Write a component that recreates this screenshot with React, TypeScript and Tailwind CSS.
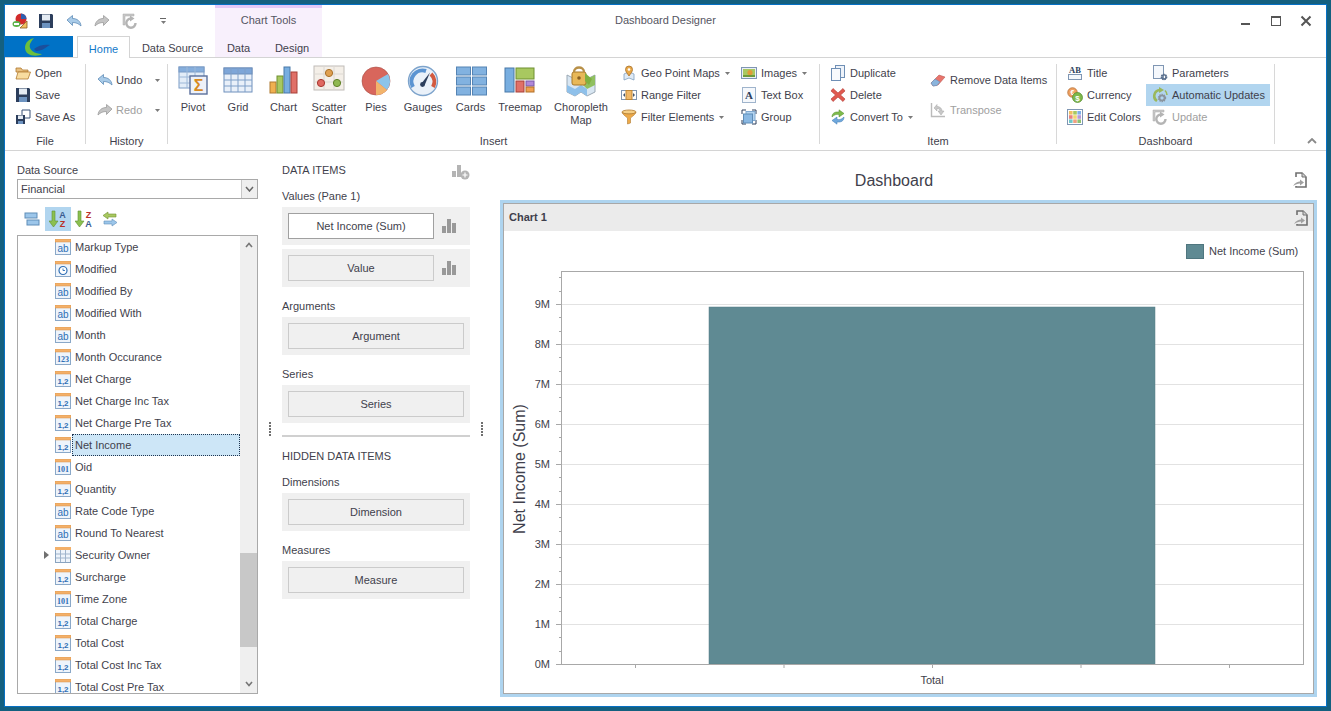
import React from "react";

const Svg = ({ size = 16, box = 16, children }: { size?: number; box?: number; children: React.ReactNode }) => (
  <svg width={size} height={size} viewBox={`0 0 ${box} ${box}`} className="shrink-0 block">
    {children}
  </svg>
);

// small icons
const AppPie = () => (
  <Svg>
    <circle cx="9" cy="6" r="5.5" fill="#d22b2b" />
    <path d="M9 6V.5A5.5 5.5 0 0 1 14.5 6Z" fill="#2f5fb0" />
    <ellipse cx="4.5" cy="11" rx="4" ry="3" fill="#5cb34a" />
    <rect x="2" y="10" width="5" height="2" fill="#fff" />
    <path d="M8 15 15 8V15Z" fill="#f0c060" stroke="#8a5a20" strokeWidth=".8" />
  </Svg>
);
const Floppy = () => (
  <Svg>
    <path d="M1 1H14L15 2V15H1Z" fill="#2c3e5c" />
    <rect x="4" y="1.5" width="8" height="6" fill="#e4ebf3" />
    <rect x="4" y="10" width="8" height="5" fill="#6d93c0" />
  </Svg>
);
const SaveAs = () => (
  <Svg>
    <path d="M7 1H15V9H7Z" fill="#fff" stroke="#3b5378" />
    <path d="M1 6H10V15H1Z" fill="#2c3e5c" />
    <rect x="3" y="6.5" width="5" height="3.5" fill="#e4ebf3" />
    <rect x="3" y="12" width="5" height="3" fill="#6d93c0" />
  </Svg>
);
const Undo = () => (
  <Svg>
    <path d="M1 7 6.5 2.5V5.5C11 5.5 14.5 8 15 13 12.5 10.5 10 9.5 6.5 9.5V12.5Z" fill="#a9cbe8" stroke="#5f8db8" strokeWidth=".8" />
  </Svg>
);
const Redo = () => (
  <Svg>
    <path d="M15 7 9.5 2.5V5.5C5 5.5 1.5 8 1 13 3.5 10.5 6 9.5 9.5 9.5V12.5Z" fill="#c4c4c4" stroke="#9c9c9c" strokeWidth=".8" />
  </Svg>
);
const Refresh = () => (
  <Svg>
    <path d="M1 1H12V3H3V12H1Z" fill="#c8c8c8" stroke="#aaa" strokeWidth=".5" />
    <path d="M13.5 10A4.6 4.6 0 1 1 9 5.5" fill="none" stroke="#b4b4b4" strokeWidth="2.4" />
    <path d="M8 2.5 12.5 5.5 8 8.5Z" fill="#b4b4b4" />
  </Svg>
);
const Folder = () => (
  <Svg>
    <path d="M1 3H6L7.5 5H13V7H1Z" fill="#e8c080" stroke="#b07a30" strokeWidth=".8" />
    <path d="M1 14 3 7H15.5L13 14Z" fill="#f8dca0" stroke="#b07a30" strokeWidth=".8" />
  </Svg>
);
const GeoPin = () => (
  <Svg>
    <path d="M3 9 5 8H11L13 9V15L8 13 3 15Z" fill="#dfeaf5" stroke="#7f9fc0" strokeWidth=".8" />
    <path d="M8 11C6 8 4.5 6.5 4.5 4.5A3.5 3.5 0 0 1 11.5 4.5C11.5 6.5 10 8 8 11Z" fill="#e8a848" stroke="#a8702a" strokeWidth=".8" />
    <circle cx="8" cy="4.5" r="1.3" fill="#fff" />
  </Svg>
);
const RangeIcon = () => (
  <Svg>
    <rect x=".5" y="3.5" width="15" height="9" fill="#fff" stroke="#7f96b3" />
    <rect x="5" y="3.5" width="6" height="9" fill="#f0b868" stroke="#c08838" />
    <path d="M4 6V10L2 8ZM12 6V10L14 8Z" fill="#42546c" />
  </Svg>
);
const Funnel = () => (
  <Svg>
    <ellipse cx="8" cy="3" rx="7" ry="2" fill="#f6cf86" stroke="#b07a30" strokeWidth=".8" />
    <path d="M1 3.5C3 7 6 8 6.5 9V15L9.5 14V9C10 8 13 7 15 3.5 12 5.5 4 5.5 1 3.5Z" fill="#eeaa48" stroke="#b07a30" strokeWidth=".6" />
  </Svg>
);
const ImagesIcon = () => (
  <Svg>
    <rect x=".5" y="2.5" width="15" height="11" fill="#e8eef6" stroke="#7f96b3" />
    <rect x="2" y="4" width="12" height="8" fill="#a8c860" />
    <circle cx="9" cy="7.5" r="2.6" fill="#e09a38" />
    <rect x="2" y="10" width="12" height="2" fill="#6f9a3a" />
  </Svg>
);
const TextBoxIcon = () => (
  <Svg>
    <rect x="1.5" y=".5" width="13" height="15" fill="#f5f8fc" stroke="#9fb4cc" />
    <text x="8" y="12" textAnchor="middle" fontSize="11" fontWeight="700" fontFamily="Liberation Serif, serif" fill="#2c3e5c">A</text>
  </Svg>
);
const GroupIcon = () => (
  <Svg>
    <path d="M1 5V1H5M11 1H15V5M15 11V15H11M5 15H1V11" fill="none" stroke="#2c3e5c" strokeWidth="1" />
    <rect x="5" y="2.5" width="9" height="9" fill="#b4d4f0" stroke="#7fa8d0" />
    <rect x="2.5" y="5" width="9" height="9" fill="#8ab8e2" stroke="#5f8db8" />
  </Svg>
);
const DuplicateIcon = () => (
  <Svg>
    <rect x="5.5" y=".5" width="9" height="12" fill="#eef3fa" stroke="#6f8fb5" />
    <rect x="1.5" y="3.5" width="9" height="12" fill="#f8fafd" stroke="#6f8fb5" />
  </Svg>
);
const DeleteIcon = () => (
  <Svg>
    <path d="M3 1.5 8 6 13 1.5 15 4 10.5 8 15 12 13 14.5 8 10 3 14.5 1 12 5.5 8 1 4Z" fill="#e05a50" stroke="#b03830" strokeWidth=".6" />
  </Svg>
);
const ConvertIcon = () => (
  <Svg>
    <path d="M2 8C2 4 5 2.5 9 3V.8L14 4.5 9 8V5.5C6 5 4 6 2 8Z" fill="#7fbb4c" stroke="#4f8a2a" strokeWidth=".5" />
    <path d="M14 8C14 12 11 13.5 7 13V15.2L2 11.5 7 8V10.5C10 11 12 10 14 8Z" fill="#6fa8dc" stroke="#3f78b0" strokeWidth=".5" />
  </Svg>
);
const EraserIcon = () => (
  <Svg>
    <path d="M1 11 9 3 15 5 8 13 3 14Z" fill="#e8746c" stroke="#b04a44" strokeWidth=".5" />
    <path d="M1 11 5 7 10 10 7 13.5 3 14Z" fill="#8ab4dc" stroke="#5f8db8" strokeWidth=".5" />
  </Svg>
);
const TransposeIcon = () => (
  <Svg>
    <path d="M1.5 1V14.5H15" fill="none" stroke="#bbb" strokeWidth="1.4" />
    <path d="M4 6 7 2.5V4.5C10 4.5 12 6.5 12 9H14L11 13 8 9H10C10 7.5 9 6.5 7 6.5V9Z" fill="#c8c8c8" stroke="#a4a4a4" strokeWidth=".5" />
  </Svg>
);
const TitleIcon = () => (
  <Svg>
    <text x="8" y="7.5" textAnchor="middle" fontSize="8.5" fontWeight="700" fontFamily="Liberation Serif, serif" fill="#2c3e5c">AB</text>
    <rect x="1.5" y="9.5" width="13" height="5" fill="#f5f8fc" stroke="#7f96b3" />
  </Svg>
);
const CurrencyIcon = () => (
  <Svg>
    <circle cx="5.5" cy="5.5" r="4.8" fill="#eea060" stroke="#b06a30" strokeWidth=".7" />
    <text x="5.5" y="8" textAnchor="middle" fontSize="7" fontWeight="700" fill="#fff" fontFamily="Liberation Sans, sans-serif">€</text>
    <circle cx="10.5" cy="10.5" r="5" fill="#7fb84a" stroke="#4f8a2a" strokeWidth=".7" />
    <text x="10.5" y="13.5" textAnchor="middle" fontSize="8" fontWeight="700" fill="#fff" fontFamily="Liberation Sans, sans-serif">$</text>
  </Svg>
);
const ColorsIcon = () => {
  const c = ["#f0c060", "#a8c860", "#7fb0e8", "#e88080", "#f0d870", "#b898d8", "#70c8c8", "#f0a080", "#90c070"];
  return (
    <Svg>
      <rect x=".5" y=".5" width="15" height="15" fill="#fff" stroke="#7f96b3" />
      {c.map((col, i) => (
        <rect key={i} x={2 + (i % 3) * 4.2} y={2 + Math.floor(i / 3) * 4.2} width="3.6" height="3.6" fill={col} />
      ))}
    </Svg>
  );
};
const Gear = ({ cx, cy, r, fill }: { cx: number; cy: number; r: number; fill: string }) => (
  <g>
    <circle cx={cx} cy={cy} r={r} fill="none" stroke={fill} strokeWidth={r * 0.8} strokeDasharray="1.2 .7" />
    <circle cx={cx} cy={cy} r={r * 0.85} fill="none" stroke={fill} strokeWidth={r * 0.5} />
  </g>
);
const ParamsIcon = () => (
  <Svg>
    <rect x="1.5" y=".5" width="10" height="13" fill="#f5f8fc" stroke="#7f96b3" />
    <Gear cx={12} cy={12} r={2.4} fill="#5a6f8c" />
  </Svg>
);
const AutoIcon = () => (
  <Svg>
    <path d="M5 14A6 6 0 0 1 8 3" fill="none" stroke="#9ab85c" strokeWidth="2.6" />
    <path d="M7 0 12 3 7 6Z" fill="#9ab85c" />
    <path d="M13 3.5C14.5 5 15 6.5 15 8" fill="none" stroke="#9ab85c" strokeWidth="1.6" />
    <Gear cx={10} cy={11} r={3} fill="#8a949e" />
  </Svg>
);
const ExportIcon = () => (
  <Svg>
    <path d="M4 5V1H10L14 5V15H4V14" fill="none" stroke="#707070" strokeWidth="1.6" />
    <path d="M10 1V5H14" fill="#d0d0d0" stroke="#707070" />
    <path d="M1 14C3 10.5 6 9.5 8 9.5V7.5L12 10.5 8 13.5V11.5C5.5 11.5 3.5 12.5 1 14Z" fill="#a0a0a0" />
  </Svg>
);
const BarsIcon = () => (
  <Svg>
    <rect x="1" y="8" width="4" height="7" fill="#999" />
    <rect x="6" y="1" width="4" height="14" fill="#999" />
    <rect x="11" y="5" width="4" height="10" fill="#999" />
  </Svg>
);
const AddBarsIcon = () => (
  <svg width="18" height="15" viewBox="0 0 18 15" className="block">
    <rect x="0" y="6" width="4" height="6" fill="#b4b4b4" />
    <rect x="5" y="0" width="4" height="12" fill="#b4b4b4" />
    <circle cx="13" cy="10" r="4.5" fill="#b4b4b4" />
    <path d="M13 7.5V12.5M10.5 10H15.5" stroke="#fff" strokeWidth="1.2" />
  </svg>
);
const Caret = () => (
  <svg width="5" height="3" viewBox="0 0 5 3" className="shrink-0 block">
    <path d="M0 0H5L2.5 3Z" fill="#7a7a7a" />
  </svg>
);

// big ribbon icons
const PivotIcon = () => (
  <Svg size={32} box={32}>
    <rect x="2" y="2" width="25" height="21" fill="#e3edf8" stroke="#7b9cc6" />
    <rect x="2" y="2" width="25" height="5" fill="#86aedc" stroke="#7b9cc6" />
    <path d="M10 2V23M18 2V23M2 12H27M2 18H27" stroke="#9db8d8" />
    <rect x="13" y="11" width="17" height="18" fill="#eef1f8" stroke="#5a6f9c" strokeWidth="1.4" />
    <text x="21.5" y="26" textAnchor="middle" fontSize="16" fontWeight="700" fontFamily="Liberation Sans, sans-serif" fill="#d98a20">Σ</text>
  </Svg>
);
const GridIcon = () => (
  <Svg size={32} box={32}>
    <rect x="2" y="3" width="28" height="24" fill="#e9f0f9" stroke="#6f90bc" />
    <rect x="2" y="3" width="28" height="6" fill="#7ea6d8" stroke="#6f90bc" />
    <path d="M9 3V27M16 3V27M23 3V27M2 15H30M2 21H30" stroke="#7f9fc8" />
  </Svg>
);
const ChartIcon = () => (
  <Svg size={32} box={32}>
    <rect x="2" y="17" width="6" height="11" fill="#f0b050" stroke="#b07a30" />
    <rect x="9" y="11" width="6" height="17" fill="#a8c860" stroke="#6f9030" />
    <rect x="16" y="2" width="6" height="26" fill="#78aee0" stroke="#4878a8" />
    <rect x="23" y="7" width="6" height="21" fill="#e07068" stroke="#a84038" />
  </Svg>
);
const ScatterIcon = () => (
  <Svg size={32} box={32}>
    <rect x="1" y="1" width="30" height="24" fill="#f4efe8" stroke="#c0bcb8" />
    <path d="M1 9H31M1 17H31M11 1V25M21 1V25" stroke="#dcd8d2" />
    <circle cx="16" cy="8" r="3.6" fill="#e0a050" stroke="#a87028" />
    <circle cx="8" cy="18" r="3.6" fill="#e06860" stroke="#a83830" />
    <circle cx="24" cy="18" r="3.6" fill="#90b850" stroke="#608028" />
  </Svg>
);
const PiesIcon = () => (
  <Svg size={32} box={32}>
    <circle cx="16" cy="16" r="14" fill="#d8665c" stroke="#a85048" strokeWidth=".6" />
    <path d="M16 16 28 9A14 14 0 0 1 27 25Z" fill="#8cc4ea" />
    <path d="M16 16 27 25A14 14 0 0 1 16 30Z" fill="#f2b46c" />
  </Svg>
);
const GaugeIcon = () => (
  <Svg size={32} box={32}>
    <circle cx="16" cy="16" r="14.5" fill="#eaf1f9" stroke="#7ea4cc" strokeWidth="1.4" />
    <path d="M6 22A11 11 0 0 1 19 6" fill="none" stroke="#5b94d2" strokeWidth="4" />
    <path d="M24 9A11 11 0 0 1 26 22" fill="none" stroke="#d25a40" strokeWidth="4" />
    <path d="M14 19 23 7.5 17.5 20.5Z" fill="#2c3e5c" />
    <circle cx="15.5" cy="19.5" r="2.4" fill="#2c3e5c" />
  </Svg>
);
const CardsIcon = () => (
  <Svg size={32} box={32}>
    {[2, 12, 22].map((y) =>
      [1, 17].map((x) => (
        <rect key={`${x}-${y}`} x={x + 0.5} y={y} width="14" height="8" fill="#82b2e0" stroke="#5584b4" />
      ))
    )}
  </Svg>
);
const TreemapIcon = () => (
  <Svg size={32} box={32}>
    <rect x="1" y="3" width="9" height="24" fill="#78aee0" stroke="#4878a8" />
    <rect x="12" y="3" width="18" height="11" fill="#a8c860" stroke="#6f9030" />
    <rect x="12" y="16" width="8" height="11" fill="#e07068" stroke="#a84038" />
    <rect x="22" y="16" width="8" height="5" fill="#b088d8" stroke="#7858a8" />
    <rect x="22" y="22" width="8" height="5" fill="#f0a050" stroke="#b07028" />
  </Svg>
);
const ChoroplethIcon = () => (
  <Svg size={32} box={32}>
    <path d="M2 10 10 14 16 10 22 14 30 10V27L22 31 16 27 10 31 2 27Z" fill="#d8e6f2" stroke="#9aa8b4" />
    <path d="M16 18 22 14 30 10V20L22 24Z" fill="#90c060" />
    <path d="M2 20 10 24 16 20 22 24V31L16 27 10 31 2 27Z" fill="#8ec0ea" />
    <rect x="7" y="7" width="14" height="13" rx="2" fill="#e8b858" stroke="#a87828" />
    <path d="M9 7C9 1 19 1 19 7" fill="none" stroke="#b89048" strokeWidth="2.4" />
    <path d="M20 8 27 14 24 20 20 16Z" fill="#7fb040" />
    <circle cx="14" cy="13" r="1.8" fill="#8a6020" />
  </Svg>
);

// field type icons
const FieldIcon = ({ kind }: { kind: string }) => {
  const serif = kind === "123" || kind === "101";
  return (
    <svg width="16" height="16" viewBox="0 0 16 16" className="shrink-0 block">
      <rect x=".5" y="2.5" width="15" height="13" fill="#eef4fb" stroke="#8aa8c8" />
      <rect x="0" y="0" width="16" height="3" fill="#f3b069" stroke="#d89048" strokeWidth=".5" />
      {kind === "clock" ? (
        <g>
          <circle cx="8" cy="9.5" r="4" fill="#fff" stroke="#2f6fb5" strokeWidth="1.2" />
          <path d="M8 7.5V9.5H10" fill="none" stroke="#2f6fb5" strokeWidth=".9" />
        </g>
      ) : (
        <text
          x="8"
          y="13"
          textAnchor="middle"
          fontSize={kind === "ab" ? 10 : 8}
          fontWeight={kind === "ab" ? 400 : 700}
          fontFamily={serif ? "Liberation Serif, serif" : "Liberation Sans, sans-serif"}
          fill="#2f6fb5"
        >
          {kind}
        </text>
      )}
    </svg>
  );
};
const TableIcon = () => (
  <svg width="16" height="16" viewBox="0 0 16 16" className="shrink-0 block">
    <rect x=".5" y="2.5" width="15" height="13" fill="#eef4fb" stroke="#8aa4c0" />
    <rect x="0" y="0" width="16" height="3" fill="#f3b069" />
    <path d="M5.5 3V15M10.5 3V15M1 7H15M1 11H15" stroke="#9fb4cc" />
  </svg>
);

const SmallBtn = ({ icon, label, caret, disabled, w }: { icon: React.ReactNode; label: string; caret?: boolean; disabled?: boolean; w?: string }) => (
  <div className={`h-[22px] flex items-center gap-[4px] whitespace-nowrap ${w ?? ""} ${disabled ? "text-[#a0a0a0]" : ""}`}>
    {icon}
    <span>{label}</span>
    {caret && <span className="ml-[1px]"><Caret /></span>}
  </div>
);

const BigBtn = ({ icon, label, w }: { icon: React.ReactNode; label: React.ReactNode; w: string }) => (
  <div className={`${w} flex flex-col items-center pt-[3px] text-center leading-[13px]`}>
    {icon}
    <span className="mt-[4px]">{label}</span>
  </div>
);

const GroupLabel = ({ children }: { children: string }) => (
  <div className="h-[14px] leading-[14px] text-center">{children}</div>
);

const Sep = () => <div className="w-px bg-[#d8d8d8] my-[6px] shrink-0" />;

const Ribbon = () => (
  <div className="h-[93px] shrink-0 flex border-b border-[#d4d4d4]">
    {/* File */}
    <div className="w-[80px] pt-[4px] flex flex-col">
      <div className="h-[72px] pl-[10px]">
        <SmallBtn icon={<Folder />} label="Open" />
        <SmallBtn icon={<Floppy />} label="Save" />
        <SmallBtn icon={<SaveAs />} label="Save As" />
      </div>
      <GroupLabel>File</GroupLabel>
    </div>
    <Sep />
    {/* History */}
    <div className="w-[81px] pt-[4px] flex flex-col">
      <div className="h-[72px] pl-[11px] pt-[7px] flex flex-col gap-[8px]">
        <div className="h-[22px] flex items-center gap-[3px]">
          <Undo />
          <span className="w-[36px]">Undo</span>
          <Caret />
        </div>
        <div className="h-[22px] flex items-center gap-[3px] text-[#a0a0a0]">
          <Redo />
          <span className="w-[36px]">Redo</span>
          <Caret />
        </div>
      </div>
      <GroupLabel>History</GroupLabel>
    </div>
    <Sep />
    {/* Insert */}
    <div className="w-[651px] pt-[4px] flex flex-col">
      <div className="h-[72px] pl-[3px] flex">
        <BigBtn w="w-[44px]" icon={<PivotIcon />} label="Pivot" />
        <BigBtn w="w-[46px]" icon={<GridIcon />} label="Grid" />
        <BigBtn w="w-[45px]" icon={<ChartIcon />} label="Chart" />
        <BigBtn w="w-[46px]" icon={<ScatterIcon />} label={<>Scatter<br />Chart</>} />
        <BigBtn w="w-[48px]" icon={<PiesIcon />} label="Pies" />
        <BigBtn w="w-[46px]" icon={<GaugeIcon />} label="Gauges" />
        <BigBtn w="w-[49px]" icon={<CardsIcon />} label="Cards" />
        <BigBtn w="w-[50px]" icon={<TreemapIcon />} label="Treemap" />
        <BigBtn w="w-[72px]" icon={<ChoroplethIcon />} label={<>Choropleth<br />Map</>} />
        <div className="w-[120px] pl-[4px]">
          <SmallBtn icon={<GeoPin />} label="Geo Point Maps" caret />
          <SmallBtn icon={<RangeIcon />} label="Range Filter" />
          <SmallBtn icon={<Funnel />} label="Filter Elements" caret />
        </div>
        <div className="pl-[4px]">
          <SmallBtn icon={<ImagesIcon />} label="Images" caret />
          <SmallBtn icon={<TextBoxIcon />} label="Text Box" />
          <SmallBtn icon={<GroupIcon />} label="Group" />
        </div>
      </div>
      <GroupLabel>Insert</GroupLabel>
    </div>
    <Sep />
    {/* Item */}
    <div className="w-[236px] pt-[4px] flex flex-col">
      <div className="h-[72px] pl-[10px] flex">
        <div className="w-[100px]">
          <SmallBtn icon={<DuplicateIcon />} label="Duplicate" />
          <SmallBtn icon={<DeleteIcon />} label="Delete" />
          <SmallBtn icon={<ConvertIcon />} label="Convert To" caret />
        </div>
        <div className="pt-[7px] flex flex-col gap-[8px]">
          <SmallBtn icon={<EraserIcon />} label="Remove Data Items" />
          <SmallBtn icon={<TransposeIcon />} label="Transpose" disabled />
        </div>
      </div>
      <GroupLabel>Item</GroupLabel>
    </div>
    <Sep />
    {/* Dashboard */}
    <div className="w-[217px] pt-[4px] flex flex-col">
      <div className="h-[72px] pl-[10px] flex">
        <div className="w-[79px]">
          <SmallBtn icon={<TitleIcon />} label="Title" />
          <SmallBtn icon={<CurrencyIcon />} label="Currency" />
          <SmallBtn icon={<ColorsIcon />} label="Edit Colors" />
        </div>
        <div className="w-[124px]">
          <div className="pl-[6px]"><SmallBtn icon={<ParamsIcon />} label="Parameters" /></div>
          <div className="pl-[6px] bg-[#b1d5ef]"><SmallBtn icon={<AutoIcon />} label="Automatic Updates" /></div>
          <div className="pl-[6px]"><SmallBtn icon={<Refresh />} label="Update" disabled /></div>
        </div>
      </div>
      <GroupLabel>Dashboard</GroupLabel>
    </div>
    <Sep />
    <div className="flex-1 flex items-end justify-end pr-[9px] pb-[6px]">
      <svg width="10" height="6" viewBox="0 0 10 6" className="block">
        <path d="M1 5 5 1 9 5" fill="none" stroke="#8a8a8a" strokeWidth="1.8" />
      </svg>
    </div>
  </div>
);

const fields: { name: string; kind: string; selected?: boolean }[] = [
  { name: "Markup Type", kind: "ab" },
  { name: "Modified", kind: "clock" },
  { name: "Modified By", kind: "ab" },
  { name: "Modified With", kind: "ab" },
  { name: "Month", kind: "ab" },
  { name: "Month Occurance", kind: "123" },
  { name: "Net Charge", kind: "1,2" },
  { name: "Net Charge Inc Tax", kind: "1,2" },
  { name: "Net Charge Pre Tax", kind: "1,2" },
  { name: "Net Income", kind: "1,2", selected: true },
  { name: "Oid", kind: "101" },
  { name: "Quantity", kind: "1,2" },
  { name: "Rate Code Type", kind: "ab" },
  { name: "Round To Nearest", kind: "ab" },
  { name: "Security Owner", kind: "table" },
  { name: "Surcharge", kind: "1,2" },
  { name: "Time Zone", kind: "101" },
  { name: "Total Charge", kind: "1,2" },
  { name: "Total Cost", kind: "1,2" },
  { name: "Total Cost Inc Tax", kind: "1,2" },
  { name: "Total Cost Pre Tax", kind: "1,2" },
];

const SortIcon = ({ top, bottom }: { top: string; bottom: string }) => (
  <Svg size={18} box={18}>
    <path d="M3 1H6V11H9L4.5 17 0 11H3Z" fill="#8cc050" stroke="#5f9030" strokeWidth=".6" />
    <text x="13.5" y="8" textAnchor="middle" fontSize="9" fontWeight="700" fontFamily="Liberation Sans, sans-serif" fill={top === "A" ? "#3a5a90" : "#b83028"}>{top}</text>
    <text x="13.5" y="16.5" textAnchor="middle" fontSize="9" fontWeight="700" fontFamily="Liberation Sans, sans-serif" fill={bottom === "A" ? "#3a5a90" : "#b83028"}>{bottom}</text>
  </Svg>
);

const LeftPanel = () => (
  <div className="w-[241px] shrink-0 h-full flex flex-col">
    <div className="h-[14px] leading-[14px] mt-[12px]">Data Source</div>
    <div className="mt-[2px] h-[20px] border border-[#a9a9a9] flex items-center pl-[3px]">
      <span className="flex-1">Financial</span>
      <div className="w-[16px] h-full bg-[#efefef] border-l border-[#c8c8c8] flex items-center justify-center">
        <svg width="9" height="6" viewBox="0 0 9 6" className="block">
          <path d="M1 1 4.5 5 8 1" fill="none" stroke="#666" strokeWidth="1.5" />
        </svg>
      </div>
    </div>
    <div className="mt-[8px] h-[24px] pl-[2px] flex items-center">
      <div className="w-[26px] h-full flex items-center justify-center">
        <Svg>
          <rect x="1" y="2" width="12" height="5" fill="#9cc6ea" stroke="#5f8db8" />
          <rect x="3" y="9" width="12" height="5" fill="#9cc6ea" stroke="#5f8db8" />
        </Svg>
      </div>
      <div className="w-[26px] h-full flex items-center justify-center bg-[#b1d5ef]">
        <SortIcon top="A" bottom="Z" />
      </div>
      <div className="w-[26px] h-full flex items-center justify-center">
        <SortIcon top="Z" bottom="A" />
      </div>
      <div className="w-[26px] h-full flex items-center justify-center">
        <Svg>
          <path d="M1 4.5 6 1V3H14V6H6V8Z" fill="#a8c860" stroke="#6f9030" strokeWidth=".6" />
          <path d="M15 11.5 10 8V10H2V13H10V15Z" fill="#9cc6ea" stroke="#5f8db8" strokeWidth=".6" />
        </Svg>
      </div>
    </div>
    <div className="mt-[4px] h-[459px] border border-[#a9a9a9] flex overflow-hidden">
      <div className="flex-1 overflow-hidden">
        {fields.map((f) => (
          <div key={f.name} className="h-[22px] flex items-center">
            <div className="w-[37px] shrink-0 flex justify-end pr-[6px]">
              {f.kind === "table" && (
                <svg width="5" height="8" viewBox="0 0 5 8" className="block">
                  <path d="M0 0 5 4 0 8Z" fill="#707070" />
                </svg>
              )}
            </div>
            {f.kind === "table" ? <TableIcon /> : <FieldIcon kind={f.kind} />}
            <span
              className={
                f.selected
                  ? "ml-[1px] flex-1 h-full flex items-center pl-[2px] bg-[#cde6f7] border border-dotted border-[#1f3550]"
                  : "ml-[4px]"
              }
            >
              {f.name}
            </span>
          </div>
        ))}
      </div>
      <div className="w-[17px] shrink-0 bg-[#efefef] flex flex-col">
        <div className="h-[317px] pt-[6px] flex justify-center">
          <svg width="8" height="6" viewBox="0 0 8 6" className="block">
            <path d="M1 5 4 1.5 7 5" fill="none" stroke="#777" strokeWidth="1.6" />
          </svg>
        </div>
        <div className="h-[94px] bg-[#c8c8c8]" />
        <div className="flex-1 flex items-end justify-center pb-[6px]">
          <svg width="8" height="6" viewBox="0 0 8 6" className="block">
            <path d="M1 1 4 4.5 7 1" fill="none" stroke="#777" strokeWidth="1.6" />
          </svg>
        </div>
      </div>
    </div>
  </div>
);

const Splitter = () => (
  <div className="w-[24px] shrink-0 flex flex-col items-center justify-center gap-[1px]">
    {[0, 1, 2, 3, 4].map((i) => (
      <div key={i} className="w-[2px] h-[2px] bg-[#707070]" />
    ))}
  </div>
);

const Slot = ({ label, active, chart, full }: { label: string; active?: boolean; chart?: boolean; full?: boolean }) => (
  <div className="h-[38px] bg-[#f0f0f0] flex items-center pl-[6px] pr-[6px]">
    <div
      className={`h-[26px] flex items-center justify-center border ${
        active ? "bg-white border-[#a0a0a0]" : "border-[#cbcbcb]"
      } ${full ? "flex-1" : "w-[146px]"}`}
    >
      {label}
    </div>
    {chart && (
      <div className="flex-1 flex justify-center">
        <BarsIcon />
      </div>
    )}
  </div>
);

const MiddlePanel = () => (
  <div className="w-[188px] shrink-0 flex flex-col">
    <div className="mt-[12px] h-[14px] leading-[14px] flex justify-between items-start">
      <span>DATA ITEMS</span>
      <span className="mt-[2px]"><AddBarsIcon /></span>
    </div>
    <div className="mt-[12px] h-[14px] leading-[14px]">Values (Pane 1)</div>
    <div className="mt-[4px] flex flex-col gap-[4px]">
      <Slot label="Net Income (Sum)" active chart />
      <Slot label="Value" chart />
    </div>
    <div className="mt-[12px] h-[14px] leading-[14px]">Arguments</div>
    <div className="mt-[4px]"><Slot label="Argument" full /></div>
    <div className="mt-[12px] h-[14px] leading-[14px]">Series</div>
    <div className="mt-[4px]"><Slot label="Series" full /></div>
    <div className="mt-[12px] h-[2px] bg-[#d0d0d0]" />
    <div className="mt-[12px] h-[14px] leading-[14px]">HIDDEN DATA ITEMS</div>
    <div className="mt-[12px] h-[14px] leading-[14px]">Dimensions</div>
    <div className="mt-[4px]"><Slot label="Dimension" full /></div>
    <div className="mt-[12px] h-[14px] leading-[14px]">Measures</div>
    <div className="mt-[4px]"><Slot label="Measure" full /></div>
  </div>
);

const ChartArea = () => {
  const major = [0, 1, 2, 3, 4, 5, 6, 7, 8, 9];
  const y = (v: number) => 433 - v * 40;
  const minors: number[] = [];
  for (let v = 0; v < 10; v += 1 / 3) minors.push(v);
  return (
    <svg width="809" height="462" viewBox="0 0 809 462" className="block">
      <rect x="682.5" y="13.5" width="17" height="14" fill="#5f8a93" stroke="#4f767f" />
      <text x="705" y="24" fontSize="11" fontFamily="Liberation Sans, sans-serif" fill="#3f3f4c">Net Income (Sum)</text>
      {major.map((m) => (
        <line key={m} x1="57" x2="799" y1={y(m) + 0.5} y2={y(m) + 0.5} stroke="#e2e2e2" />
      ))}
      <rect x="205" y="76" width="446" height="357" fill="#5f8a93" stroke="#567e87" strokeWidth=".5" />
      <rect x="57.5" y="40.5" width="742" height="393" fill="none" stroke="#a8a8a8" />
      {minors.map((m, i) => (
        <line key={i} x1={i % 3 === 0 ? 52 : 55} x2="57" y1={Math.round(y(m)) + 0.5} y2={Math.round(y(m)) + 0.5} stroke="#a8a8a8" />
      ))}
      {major.map((m) => (
        <text key={m} x="46" y={y(m) + 4} textAnchor="end" fontSize="11" fontFamily="Liberation Sans, sans-serif" fill="#3f3f4c">
          {m}M
        </text>
      ))}
      {[131, 279.5, 428, 576.5, 725].map((x) => (
        <line key={x} x1={x + 0.5} x2={x + 0.5} y1="434" y2="437" stroke="#a8a8a8" />
      ))}
      <text x="428" y="453" textAnchor="middle" fontSize="11" fontFamily="Liberation Sans, sans-serif" fill="#3f3f4c">Total</text>
      <text
        x="21"
        y="238"
        textAnchor="middle"
        fontSize="16"
        fontFamily="Liberation Sans, sans-serif"
        fill="#3f3f4c"
        transform="rotate(-90 21 238)"
      >
        Net Income (Sum)
      </text>
    </svg>
  );
};

const RightPanel = () => (
  <div className="w-[817px] shrink-0 flex flex-col">
    <div className="h-[49px] relative flex items-center justify-center pt-[10px] pr-[29px] text-[16px]">
      Dashboard
      <span className="absolute right-[9px] top-[21px]"><ExportIcon /></span>
    </div>
    <div className="h-[497px] border-[3px] border-[#aed4ef]">
      <div className="h-full border border-[#a8a8a8] flex flex-col">
        <div className="h-[27px] shrink-0 bg-[#ebebeb] flex items-center justify-between pl-[5px] pr-[3px] font-bold">
          <span>Chart 1</span>
          <span className="mr-[1px]"><ExportIcon /></span>
        </div>
        <ChartArea />
      </div>
    </div>
  </div>
);

export default function App() {
  return (
    <div className="w-[1331px] h-[711px] overflow-hidden bg-[#14607f] p-[4px] font-['Liberation_Sans',sans-serif] text-[11px] text-[#3f3f4c]">
      <div className="h-full border border-[#0670c4] bg-white flex flex-col">
        {/* title bar */}
        <div className="h-[31px] shrink-0 flex">
          <div className="w-[210px] flex items-center pl-[7px]">
            <div className="w-[26px]"><AppPie /></div>
            <div className="w-[28px]"><Floppy /></div>
            <div className="w-[28px]"><Undo /></div>
            <div className="w-[28px]"><Redo /></div>
            <div className="w-[38px]"><Refresh /></div>
            <div className="flex flex-col items-center gap-[2px]">
              <div className="w-[6px] h-px bg-[#666]" />
              <Caret />
            </div>
          </div>
          <div className="w-[107px] bg-[#f8f0fc] border-t-[3px] border-[#e2c9f6] flex items-center justify-center pb-[3px] text-[#555562]">
            Chart Tools
          </div>
          <div className="ml-[293px] flex items-center text-[#555562]">Dashboard Designer</div>
          <div className="ml-auto flex items-center pr-[14px] gap-[18px]">
            <svg width="12" height="12" viewBox="0 0 12 12" className="block">
              <rect x="1" y="8" width="9" height="2" fill="#555" />
            </svg>
            <svg width="12" height="12" viewBox="0 0 12 12" className="block">
              <rect x="1.5" y="1.5" width="9" height="9" fill="none" stroke="#555" />
              <rect x="1" y="1" width="10" height="2" fill="#555" />
            </svg>
            <svg width="12" height="12" viewBox="0 0 12 12" className="block">
              <path d="M1.5 1.5 10.5 10.5M10.5 1.5 1.5 10.5" stroke="#555" strokeWidth="2" />
            </svg>
          </div>
        </div>
        {/* tabs */}
        <div className="h-[22px] shrink-0 flex border-b border-[#d4d4d4]">
          <div className="w-[68px] h-[21px] bg-[#0072c6] flex items-center justify-center">
            <svg width="34" height="20" viewBox="0 0 34 20" className="block">
              <path d="M12 1C3 3 1 11 5 16 10 20 17 19 20 17 13 17 6 13 8 7 9 5 10 3 12 1Z" fill="#6dc03c" />
              <path d="M12 12C16 8 24 7 28 8 24 10 21 14 14 14Z" fill="#1b4f9c" />
            </svg>
          </div>
          <div className="ml-[4px] w-[53px] h-[22px] bg-white border border-b-0 border-[#d4d4d4] flex items-center justify-center pt-[3px] text-[#1479c9]">
            Home
          </div>
          <div className="w-[85px] flex items-center justify-center pt-[3px]">Data Source</div>
          <div className="w-[47px] bg-[#f8f0fc] flex items-center justify-center pt-[3px]">Data</div>
          <div className="w-[60px] bg-[#f8f0fc] flex items-center justify-center pt-[3px]">Design</div>
        </div>
        <Ribbon />
        {/* body */}
        <div className="flex-1 flex pl-[12px] overflow-hidden">
          <LeftPanel />
          <Splitter />
          <MiddlePanel />
          <Splitter />
          <div className="w-[6px] shrink-0" />
          <RightPanel />
        </div>
      </div>
    </div>
  );
}
